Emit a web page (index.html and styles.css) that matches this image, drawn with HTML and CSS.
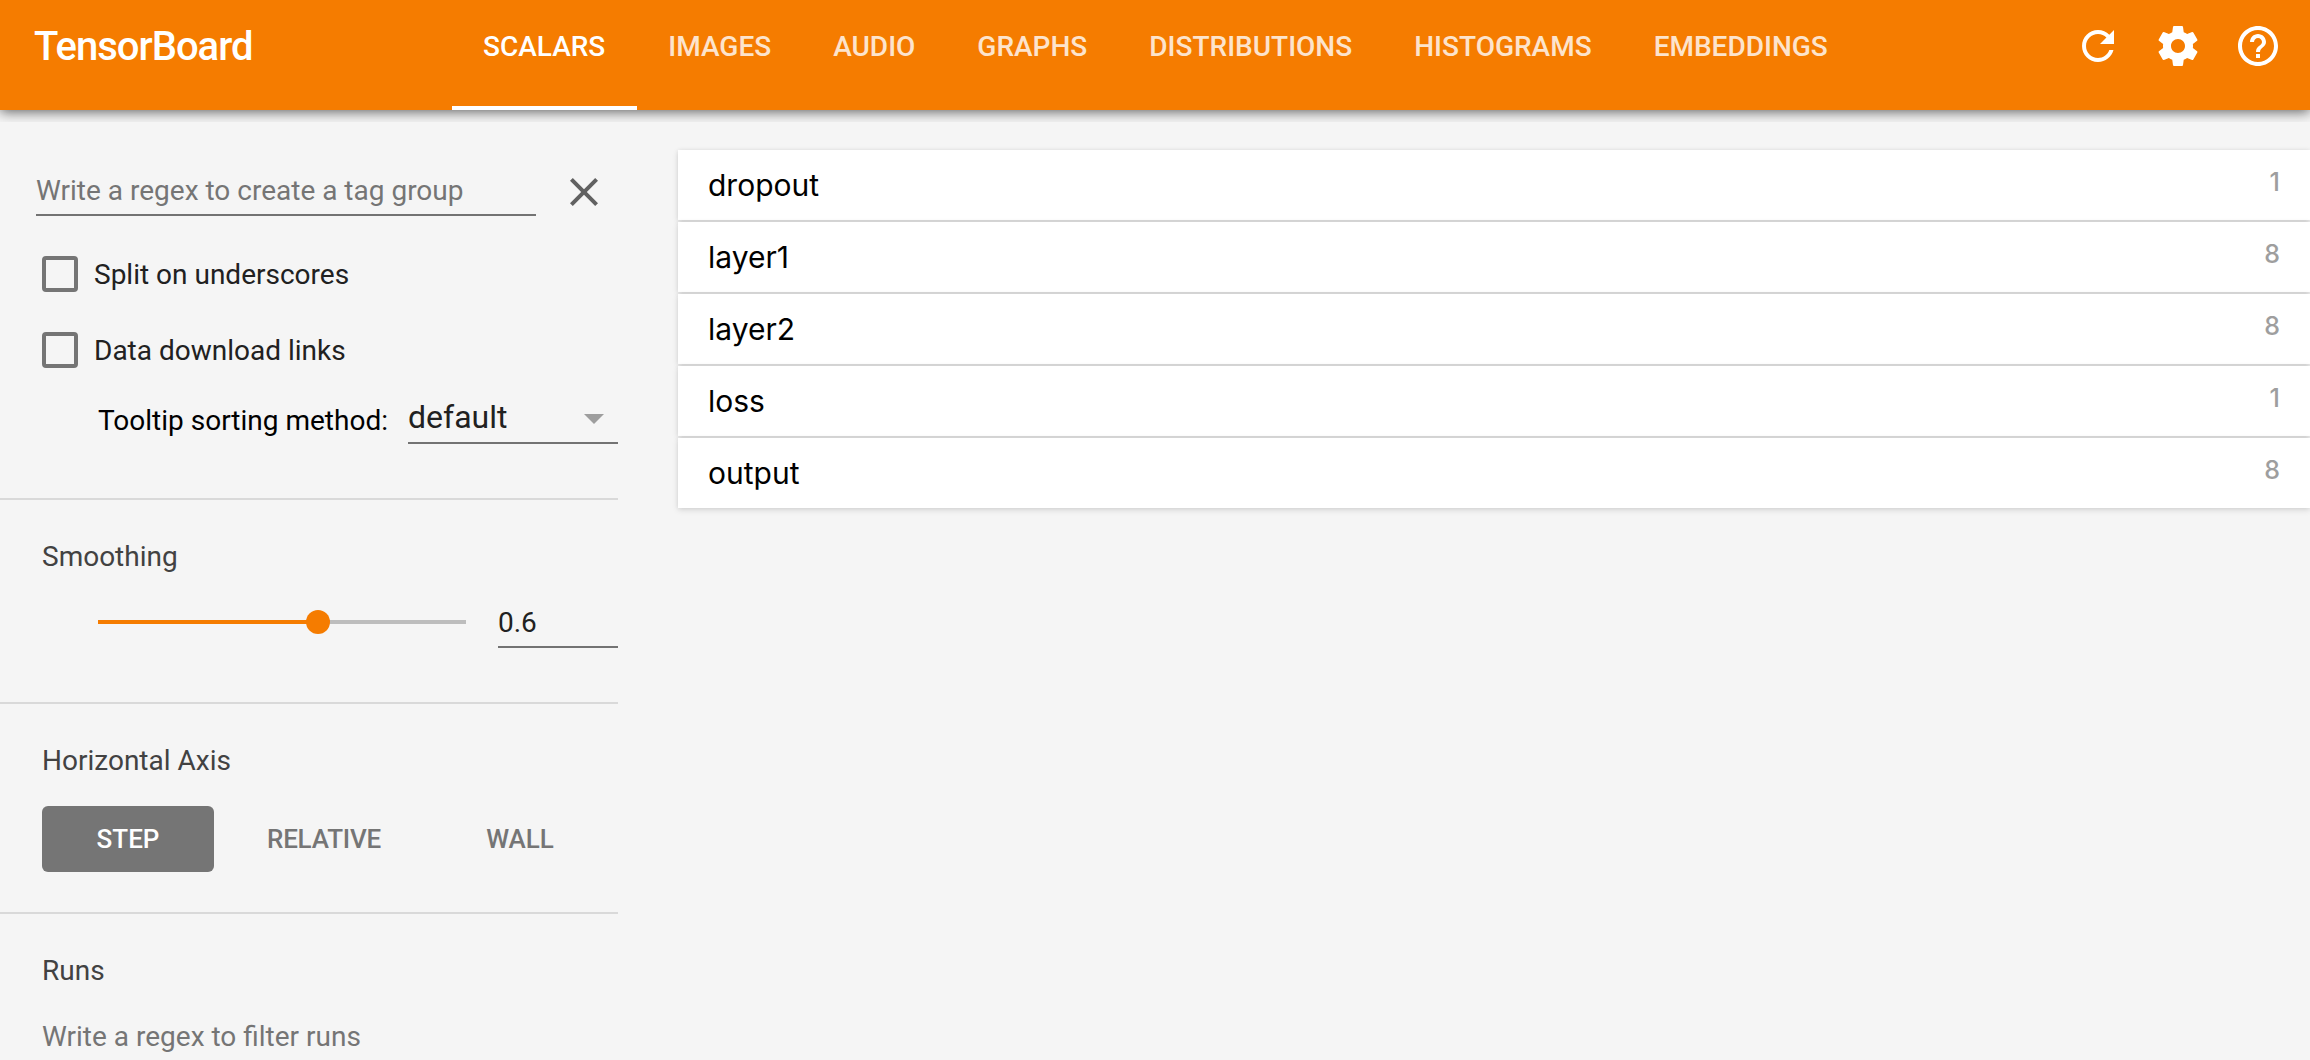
FILE: index.html
```html
<!DOCTYPE html>
<html lang="en">
<head>
<meta charset="utf-8">
<title>TensorBoard</title>
<link rel="stylesheet" href="styles.css">
</head>
<body>
<header class="toolbar">
  <h1 class="brand">TensorBoard</h1>
  <nav class="tabs">
    <a class="tab tab-active"><span>SCALARS</span></a>
    <a class="tab"><span>IMAGES</span></a>
    <a class="tab"><span>AUDIO</span></a>
    <a class="tab"><span>GRAPHS</span></a>
    <a class="tab"><span>DISTRIBUTIONS</span></a>
    <a class="tab"><span>HISTOGRAMS</span></a>
    <a class="tab"><span>EMBEDDINGS</span></a>
  </nav>
  <div class="actions">
    <svg class="icon" viewBox="0 0 24 24"><path d="M17.65 6.35C16.2 4.9 14.21 4 12 4c-4.42 0-7.99 3.58-7.99 8s3.57 8 7.99 8c3.73 0 6.84-2.55 7.73-6h-2.08c-.82 2.33-3.04 4-5.65 4-3.31 0-6-2.69-6-6s2.69-6 6-6c1.66 0 3.14.69 4.22 1.78L13 11h7V4l-2.35 2.35z"/></svg>
    <svg class="icon" viewBox="0 0 24 24"><path d="M19.43 12.98c.04-.32.07-.64.07-.98s-.03-.66-.07-.98l2.11-1.65c.19-.15.24-.42.12-.64l-2-3.46c-.12-.22-.39-.3-.61-.22l-2.49 1c-.52-.4-1.08-.73-1.69-.98l-.38-2.65C14.46 2.18 14.25 2 14 2h-4c-.25 0-.46.18-.49.42l-.38 2.65c-.61.25-1.17.59-1.69.98l-2.49-1c-.23-.09-.49 0-.61.22l-2 3.46c-.13.22-.07.49.12.64l2.11 1.65c-.04.32-.07.65-.07.98s.03.66.07.98l-2.11 1.65c-.19.15-.24.42-.12.64l2 3.46c.12.22.39.3.61.22l2.49-1c.52.4 1.08.73 1.69.98l.38 2.65c.03.24.24.42.49.42h4c.25 0 .46-.18.49-.42l.38-2.65c.61-.25 1.17-.59 1.69-.98l2.49 1c.23.09.49 0 .61-.22l2-3.46c.12-.22.07-.49-.12-.64l-2.11-1.65zM12 15.5c-1.93 0-3.5-1.57-3.5-3.5s1.57-3.5 3.5-3.5 3.5 1.57 3.5 3.5-1.57 3.5-3.5 3.5z"/></svg>
    <svg class="icon" viewBox="0 0 24 24"><path d="M11 18h2v-2h-2v2zm1-16C6.48 2 2 6.48 2 12s4.48 10 10 10 10-4.48 10-10S17.52 2 12 2zm0 18c-4.41 0-8-3.59-8-8s3.59-8 8-8 8 3.59 8 8-3.59 8-8 8zm0-14c-2.21 0-4 1.79-4 4h2c0-1.1.9-2 2-2s2 .9 2 2c0 2-3 1.75-3 5h2c0-2.25 3-2.5 3-5 0-2.21-1.79-4-4-4z"/></svg>
  </div>
</header>
<div class="content">
  <aside class="sidebar">
    <section class="section options">
      <div class="regex-row">
        <div class="field regex-field">Write a regex to create a tag group</div>
        <svg class="icon close" viewBox="0 0 24 24"><path d="M19 6.41L17.59 5 12 10.59 6.41 5 5 6.41 10.59 12 5 17.59 6.41 19 12 13.41 17.59 19 19 17.59 13.41 12z"/></svg>
      </div>
      <label class="check"><span class="box"></span><span class="check-text">Split on underscores</span></label>
      <label class="check"><span class="box"></span><span class="check-text">Data download links</span></label>
      <div class="sort-row">
        <span class="sort-label">Tooltip sorting method:</span>
        <div class="select"><span class="select-text">default</span><svg class="caret" viewBox="0 0 20 10"><path d="M0 0h20L10 10z"/></svg></div>
      </div>
    </section>
    <section class="section smoothing">
      <h2 class="heading">Smoothing</h2>
      <div class="slider-row">
        <div class="slider"><div class="slider-fill" style="width:60%"></div><div class="knob"></div><div class="slider-rest"></div></div>
        <div class="field number">0.6</div>
      </div>
    </section>
    <section class="section axis">
      <h2 class="heading">Horizontal Axis</h2>
      <div class="buttons">
        <span class="button button-on">STEP</span>
        <span class="button relative">RELATIVE</span>
        <span class="button wall">WALL</span>
      </div>
    </section>
    <section class="section runs">
      <h2 class="heading">Runs</h2>
      <div class="filter">Write a regex to filter runs</div>
    </section>
  </aside>
  <main class="panes">
    <div class="pane"><span class="name">dropout</span><span class="count">1</span></div>
    <div class="pane"><span class="name">layer1</span><span class="count">8</span></div>
    <div class="pane"><span class="name">layer2</span><span class="count">8</span></div>
    <div class="pane"><span class="name">loss</span><span class="count">1</span></div>
    <div class="pane"><span class="name">output</span><span class="count">8</span></div>
  </main>
</div>
</body>
</html>
```
FILE: styles.css
```css
* { box-sizing: border-box; }
body {
  margin: 0;
  height: 1060px;
  overflow: hidden;
  background: #f5f5f5;
  font: 400 28px/42px Roboto, sans-serif;
  color: #212121;
  display: flex;
  flex-direction: column;
}
.icon { width: 48px; height: 48px; fill: currentColor; flex: none; }

.toolbar {
  flex: none;
  height: 110px;
  display: flex;
  background: #f57c00;
  color: #fff;
  box-shadow: 0 2px 12px rgba(0, 0, 0, .6);
  clip-path: inset(0 0 -12px 0);
}
.brand {
  width: 452px;
  margin: 0;
  padding: 23px 0 0 34px;
  font-size: 40px;
  line-height: 48px;
  font-weight: 500;
  letter-spacing: -1px;
}
.tabs { display: flex; }
.tab {
  padding: 26px 31px 0;
  font-weight: 500;
  border-bottom: 4px solid transparent;
}
.tab span { opacity: .8; }
.tab-active { border-bottom-color: #fff; padding-right: 32px; }
.tab-active span { opacity: 1; }
.actions { margin-left: auto; display: flex; gap: 32px; padding: 22px 28px 0 0; }

.content { flex: 1; display: flex; min-height: 0; }
.sidebar { width: 618px; flex: none; }
.section { padding-left: 42px; border-bottom: 2px solid #d9d9d9; }
.options { height: 390px; padding-top: 60px; }
.regex-row { display: flex; gap: 24px; margin-left: -6px; }
.field { border-bottom: 2px solid #737373; }
.regex-field { width: 500px; height: 46px; color: #757575; }
.close { color: #616161; margin-top: -2px; }
.check { display: flex; align-items: center; gap: 16px; height: 36px; margin-top: 40px; }
.box { width: 36px; height: 36px; border: 4px solid #757575; border-radius: 4px; }
.check-text { line-height: 36px; padding-top: 2px; }
.sort-row { display: flex; justify-content: space-between; margin-top: 30px; padding-left: 56px; }
.sort-label { color: #000; padding-top: 2px; }
.select {
  width: 210px;
  height: 46px;
  display: flex;
  justify-content: space-between;
  border-bottom: 2px solid #737373;
  padding-right: 14px;
  font-size: 32px;
  line-height: 38px;
}
.caret { width: 20px; height: 10px; margin-top: 16px; fill: #9e9e9e; }
.heading { margin: 0; font-size: 28px; line-height: 40px; font-weight: 400; color: #424242; }
.smoothing { height: 204px; padding-top: 37px; }
.slider-row { display: flex; justify-content: space-between; padding-left: 56px; margin-top: 25px; }
.slider { width: 368px; height: 40px; display: flex; align-items: center; }
.slider-fill { height: 4px; background: #f57c00; }
.knob { width: 24px; height: 24px; margin: 0 -11px 0 -13px; border-radius: 50%; background: #f57c00; flex: none; z-index: 1; }
.slider-rest { flex: 1; height: 4px; background: #bdbdbd; }
.number { width: 120px; height: 46px; }
.axis { height: 210px; padding-top: 37px; }
.buttons { display: flex; margin-top: 25px; }
.button {
  height: 66px;
  line-height: 67px;
  font-size: 26px;
  font-weight: 500;
  color: #757575;
  text-align: center;
}
.button-on { width: 172px; background: #757575; color: #fff; border-radius: 6px; }
.relative { width: 220px; letter-spacing: -.2px; }
.wall { width: 172px; }
.runs { border: 0; padding-top: 37px; }
.filter { margin-top: 25px; color: #757575; }

.panes { flex: 1; margin-left: 60px; padding-top: 40px; display: flex; flex-direction: column; gap: 2px; }
.pane {
  height: 70px;
  display: flex;
  justify-content: space-between;
  align-items: flex-start;
  padding: 0 30px;
  background: #fff;
  box-shadow: 0 2px 6px rgba(0, 0, 0, .13), 0 0 4px rgba(0, 0, 0, .06);
  font-family: Inter, sans-serif;
}
.name { font-size: 30px; line-height: 70px; letter-spacing: 0; color: #000; }
.count { font-size: 25px; line-height: 64px; font-weight: 500; color: #9e9e9e; }
```
